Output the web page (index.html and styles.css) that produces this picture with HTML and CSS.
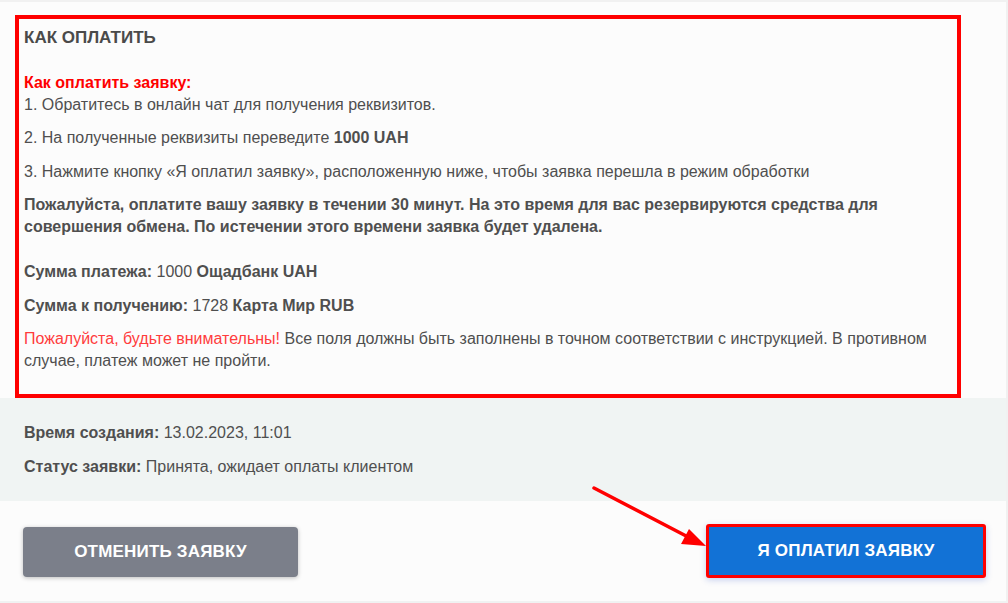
FILE: index.html
```html
<!DOCTYPE html>
<html lang="ru">
<head>
<meta charset="utf-8">
<title>Как оплатить</title>
<link rel="stylesheet" href="styles.css">
</head>
<body>
<div class="page">
  <div class="top">
    <div class="howto">
      <h2 class="howto-title">КАК ОПЛАТИТЬ</h2>
      <p class="p"><span class="red-b">Как оплатить заявку:</span><br>1. Обратитесь в онлайн чат для получения реквизитов.</p>
      <p class="p">2. На полученные реквизиты переведите <b>1000 UAH</b></p>
      <p class="p">3. Нажмите кнопку «Я оплатил заявку», расположенную ниже, чтобы заявка перешла в режим обработки</p>
      <p class="p b gap">Пожалуйста, оплатите вашу заявку в течении 30 минут. На это время для вас резервируются средства для совершения обмена. По истечении этого времени заявка будет удалена.</p>
      <p class="p"><b>Сумма платежа:</b> 1000 <b>Ощадбанк UAH</b></p>
      <p class="p"><b>Сумма к получению:</b> 1728 <b>Карта Мир RUB</b></p>
      <p class="p last"><span class="red">Пожалуйста, будьте внимательны!</span> Все поля должны быть заполнены в точном соответствии с инструкцией. В противном случае, платеж может не пройти.</p>
    </div>
  </div>
  <div class="status">
    <p class="p"><b>Время создания:</b> 13.02.2023, 11:01</p>
    <p class="p last"><b>Статус заявки:</b> Принята, ожидает оплаты клиентом</p>
  </div>
  <div class="actions">
    <button class="btn btn-cancel">ОТМЕНИТЬ ЗАЯВКУ</button>
    <button class="btn btn-pay">Я ОПЛАТИЛ ЗАЯВКУ</button>
  </div>
  <svg class="arrow" width="140" height="80" viewBox="0 0 140 80">
    <line x1="6" y1="6" x2="102" y2="56" stroke="#ff0000" stroke-width="3.5" stroke-linecap="round"/>
    <polygon points="118,64 93,62 101,47" fill="#ff0000"/>
  </svg>
</div>
</body>
</html>
```
FILE: styles.css
```css
html, body {
  margin: 0;
  padding: 0;
  background: #f1f1f1;
}
body {
  font-family: "Liberation Sans", Arial, sans-serif;
  font-size: 16px;
  color: #4f4f4f;
}
.page {
  position: relative;
  width: 1006px;
  margin-top: 2px;
  background: #fcfcfc;
}
.top {
  padding: 13px 45px 0 15px;
}
.howto {
  border: 4px solid #ff0000;
  padding: 8px 5px 23px 5px;
}
.howto-title {
  margin: 0 0 23px;
  font-size: 17px;
  line-height: 22px;
  font-weight: bold;
  color: #4a4a4a;
}
.p {
  margin: 0 0 12px;
  line-height: 21.5px;
}
.p.last {
  margin-bottom: 0;
}
.b, b {
  font-weight: bold;
}
.gap {
  margin-bottom: 24px;
}
.red-b {
  color: #ff0000;
  font-weight: bold;
}
.red {
  color: #ff3c3c;
}
.status {
  background: #f0f4f3;
  padding: 24px 24px 24px;
}
.actions {
  height: 100px;
  display: flex;
  align-items: center;
  justify-content: space-between;
  padding: 0 20px 0 23px;
  border-bottom: 3px solid #f0f2f2;
}
.btn {
  font-family: "Liberation Sans", Arial, sans-serif;
  font-weight: bold;
  font-size: 17px;
  letter-spacing: 0.2px;
  color: #fff;
  border: none;
  border-radius: 4px;
  cursor: pointer;
}
.btn-cancel {
  width: 275px;
  height: 50px;
  margin-top: 2px;
  background: #7b7f8a;
  box-shadow: 0 1px 4px rgba(0,0,0,0.25);
}
.btn-pay {
  width: 280px;
  height: 54px;
  background: #1272d6;
  border: 3.5px solid #ff0000;
  border-radius: 3px;
  box-shadow: 0 2px 6px rgba(40,80,200,0.25);
}
.arrow {
  position: absolute;
  left: 588px;
  top: 480px;
}
```
